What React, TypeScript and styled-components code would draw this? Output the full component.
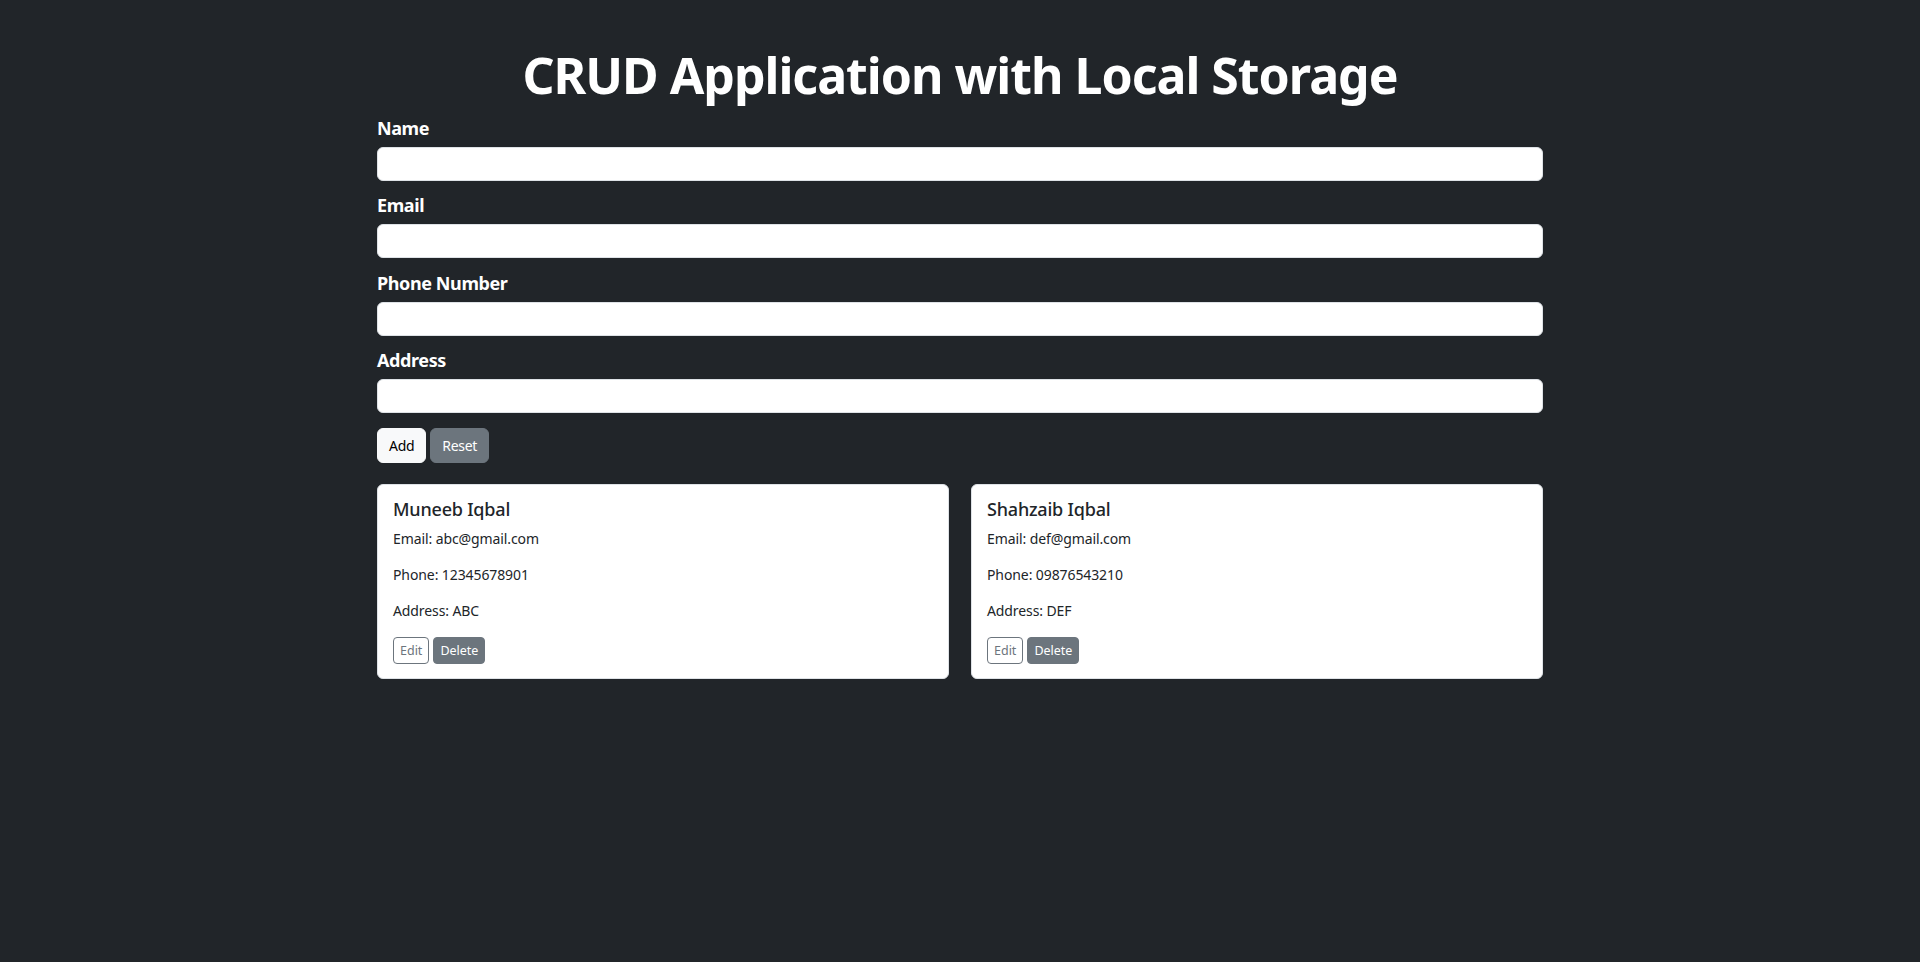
import styled, { createGlobalStyle } from "styled-components";

interface Contact {
  name: string;
  email: string;
  phone: string;
  address: string;
}

const contacts: Contact[] = [
  { name: "Muneeb Iqbal", email: "abc@gmail.com", phone: "12345678901", address: "ABC" },
  { name: "Shahzaib Iqbal", email: "def@gmail.com", phone: "09876543210", address: "DEF" },
];

const fields = ["Name", "Email", "Phone Number", "Address"];

const GlobalStyle = createGlobalStyle`
  html, body {
    margin: 0;
    padding: 0;
    background: #212529;
  }
  body {
    font-family: "Noto Sans", "Open Sans", sans-serif;
    color: #fff;
    min-height: 100vh;
  }
  * { box-sizing: border-box; }
`;

const Page = styled.div`
  width: 1166px;
  margin: 0 auto;
  padding-top: 45px;
`;

const Title = styled.h1`
  margin: 0 0 11px;
  font-size: 50px;
  line-height: 60px;
  font-weight: 700;
  text-align: center;
  letter-spacing: -1px;
`;

const Field = styled.div`
  margin-bottom: 12.33px;
`;

const Label = styled.label`
  display: block;
  font-size: 18px;
  line-height: 24px;
  font-weight: 700;
  letter-spacing: -0.4px;
  margin-bottom: 7px;
`;

const Input = styled.input`
  display: block;
  width: 100%;
  height: 34px;
  padding: 0 12px;
  font: inherit;
  font-size: 15px;
  background: #fff;
  border: 1px solid #dee2e6;
  border-radius: 6px;
  outline: none;
`;

const Actions = styled.div`
  display: flex;
  gap: 4px;
  margin-top: 15px;
  margin-bottom: 21px;
`;

const Button = styled.button<{ $variant: "light" | "secondary" }>`
  height: 35px;
  padding: 0 11px;
  font-family: inherit;
  font-size: 14px;
  letter-spacing: -0.3px;
  border-radius: 6px;
  border: 1px solid ${(p) => (p.$variant === "light" ? "#f8f9fa" : "#6c757d")};
  background: ${(p) => (p.$variant === "light" ? "#f8f9fa" : "#6c757d")};
  color: ${(p) => (p.$variant === "light" ? "#000" : "#fff")};
  cursor: pointer;
`;

const Grid = styled.div`
  display: grid;
  grid-template-columns: 1fr 1fr;
  gap: 22px;
`;

const Card = styled.div`
  background: #fff;
  border: 1px solid #dee2e6;
  border-radius: 6px;
  padding: 12px 15px 14px;
  color: #212529;
`;

const CardTitle = styled.h5`
  margin: 0 0 8px;
  font-size: 18px;
  line-height: 24px;
  font-weight: 500;
  letter-spacing: -0.2px;
`;

const CardText = styled.p`
  margin: 0 0 16px;
  font-size: 14px;
  line-height: 20px;
  letter-spacing: -0.1px;
`;

const CardActions = styled.div`
  display: flex;
  gap: 4px;
`;

const SmallButton = styled.button<{ $outline?: boolean }>`
  height: 27px;
  padding: 0 6px;
  font-family: inherit;
  font-size: 12.5px;
  border-radius: 4px;
  border: 1px solid #6c757d;
  background: ${(p) => (p.$outline ? "#fff" : "#6c757d")};
  color: ${(p) => (p.$outline ? "#6c757d" : "#fff")};
  cursor: pointer;
`;

export default function App() {
  return (
    <>
      <GlobalStyle />
      <Page>
        <Title>CRUD Application with Local Storage</Title>
        {fields.map((f) => (
          <Field key={f}>
            <Label>{f}</Label>
            <Input type="text" />
          </Field>
        ))}
        <Actions>
          <Button $variant="light">Add</Button>
          <Button $variant="secondary">Reset</Button>
        </Actions>
        <Grid>
          {contacts.map((c) => (
            <Card key={c.email}>
              <CardTitle>{c.name}</CardTitle>
              <CardText>Email: {c.email}</CardText>
              <CardText>Phone: {c.phone}</CardText>
              <CardText>Address: {c.address}</CardText>
              <CardActions>
                <SmallButton $outline>Edit</SmallButton>
                <SmallButton>Delete</SmallButton>
              </CardActions>
            </Card>
          ))}
        </Grid>
      </Page>
    </>
  );
}
